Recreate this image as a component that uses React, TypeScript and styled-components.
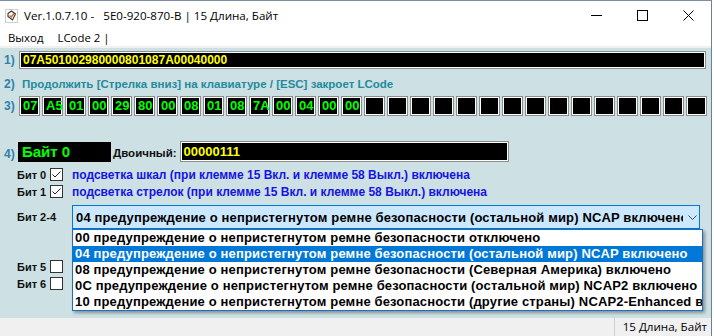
import React from "react";
import styled, { createGlobalStyle } from "styled-components";

const GlobalStyle = createGlobalStyle`
  html, body {
    margin: 0;
    padding: 0;
    background: #ffffff;
  }
  body {
    font-family: "Liberation Sans", Arial, sans-serif;
  }
  * {
    box-sizing: border-box;
  }
`;

const uiFont = `"Open Sans", "Noto Sans", sans-serif`;

const Window = styled.div`
  width: 712px;
  height: 336px;
  display: flex;
  flex-direction: column;
  border-top: 1px solid #7b8ea6;
  border-right: 1px solid #6f7f92;
  background: #ffffff;
  overflow: hidden;
`;

const TitleBar = styled.div`
  height: 29px;
  display: flex;
  align-items: center;
  padding-left: 5px;
`;

const TitleText = styled.div`
  flex: 1;
  margin-left: 6px;
  font: 11.6px ${uiFont};
  color: #000;
  white-space: pre;
`;

const CaptionButton = styled.div`
  width: 46px;
  height: 29px;
  display: flex;
  align-items: center;
  justify-content: center;
`;

const MenuBar = styled.div`
  height: 18px;
  display: flex;
  align-items: center;
  padding: 0 0 2px 8px;
  border-bottom: 2px solid #f0f0f0;
  font: 11.4px ${uiFont};
`;

const MenuItem = styled.span`
  margin-right: 14px;
`;

const Client = styled.div`
  flex: 1;
  background: #cde0e3;
  padding: 3px 3px 0 4px;
  display: flex;
  flex-direction: column;
`;

const Row = styled.div<{ $top?: number; $h: number }>`
  display: flex;
  align-items: center;
  height: ${(p) => p.$h}px;
  margin-top: ${(p) => p.$top ?? 0}px;
`;

const RowLabel = styled.span<{ $w?: number; $drop?: number }>`
  width: ${(p) => p.$w ?? 15}px;
  flex-shrink: 0;
  font-weight: bold;
  font-size: 12px;
  color: #2f82aa;
  padding-top: ${(p) => p.$drop ?? 0}px;
`;

const CodeBox = styled.div`
  flex: 1;
  height: 18px;
  background: #000;
  border: 1px solid #8c8c8c;
  box-shadow: inset 0 0 0 1px #ffffff;
  padding-left: 3px;
  color: #ffff00;
  font-weight: bold;
  font-size: 12px;
  line-height: 16px;
  margin-right: 2px;
`;

const Hint = styled.span`
  margin-left: 3px;
  font-weight: bold;
  font-size: 11.5px;
  color: #1f8b9d;
  white-space: nowrap;
`;

const Cells = styled.div`
  display: flex;
  gap: 2px;
`;

const Cell = styled.div`
  width: 21px;
  height: 20px;
  background: #000;
  border: 1px solid #8c8c8c;
  box-shadow: inset 0 0 0 1px #ffffff;
  color: #00ff00;
  font-weight: bold;
  font-size: 13px;
  line-height: 18px;
  padding-left: 3px;
`;

const ByteName = styled.div`
  width: 93px;
  height: 20px;
  background: #000;
  color: #00ff00;
  font-weight: bold;
  font-size: 15px;
  line-height: 20px;
  padding-left: 4px;
`;

const FieldLabel = styled.span`
  margin-left: 2px;
  font-weight: bold;
  font-size: 11.5px;
  color: #111;
  padding-top: 3px;
`;

const BinaryBox = styled.div`
  width: 329px;
  height: 21px;
  margin-left: 3px;
  background: #000;
  border: 1px solid #8c8c8c;
  box-shadow: inset 0 0 0 1px #ffffff;
  color: #ffff00;
  font-weight: bold;
  font-size: 13px;
  line-height: 19px;
  padding-left: 3px;
`;

const Bits = styled.div`
  display: flex;
  flex-direction: column;
  padding-left: 13px;
`;

const BitLabel = styled.span`
  width: 33px;
  flex-shrink: 0;
  font-weight: bold;
  font-size: 11px;
  color: #111;
  white-space: nowrap;
`;

const CheckBox = styled.div`
  width: 13px;
  height: 13px;
  background: #fff;
  border: 1px solid #333;
  display: flex;
  align-items: center;
  justify-content: center;
`;

const BitText = styled.span`
  margin-left: 9px;
  font-weight: bold;
  font-size: 12px;
  color: #1414e6;
  white-space: nowrap;
`;

const Combo = styled.div`
  position: relative;
  width: 628px;
  height: 24px;
  margin-left: 22px;
  background: #cce8ff;
  border: 1px solid #0078d7;
  display: flex;
  align-items: center;
  padding: 0 2px 0 3px;
`;

const ComboText = styled.span`
  flex: 1;
  overflow: hidden;
  white-space: nowrap;
  font-weight: bold;
  font-size: 13px;
  letter-spacing: 0.15px;
  color: #000;
  margin-right: 5px;
`;

const DropList = styled.div`
  position: absolute;
  top: 23px;
  left: -1px;
  width: 631px;
  background: #fff;
  border: 1px solid #1a6fc4;
  box-shadow: 2px 2px 3px rgba(0, 0, 0, 0.35);
  z-index: 2;
`;

const DropItem = styled.div<{ $selected?: boolean }>`
  height: 16px;
  line-height: 16px;
  padding-left: 2px;
  white-space: nowrap;
  overflow: hidden;
  font-weight: bold;
  font-size: 13px;
  letter-spacing: 0.15px;
  background: ${(p) => (p.$selected ? "#0078d7" : "#fff")};
  color: ${(p) => (p.$selected ? "#fff" : "#000")};
`;

const StatusBar = styled.div`
  height: 18px;
  background: #f0f0f0;
  display: flex;
  justify-content: flex-end;
`;

const StatusPanel = styled.div`
  border-left: 1px solid #d0d0d0;
  padding: 0 4px 0 8px;
  font: 11.6px ${uiFont};
  line-height: 18px;
  color: #000;
`;

const AppIcon = () => (
  <svg width="13" height="14" viewBox="0 0 13 14">
    <rect x="0.5" y="0.5" width="12" height="13" fill="#fff" stroke="#9a9a9a" strokeDasharray="1 1" />
    <path d="M3 4.5 L6.5 2 L10.5 5 L7.5 11 L3 7.5 Z" fill="none" stroke="#333" strokeWidth="1.1" />
    <path d="M4.5 6.5 L6.3 8 L9 4.5" fill="none" stroke="#e8632a" strokeWidth="1.5" />
  </svg>
);

const Check = () => (
  <svg width="11" height="11" viewBox="0 0 11 11">
    <path d="M1.5 5.5 L4 8 L9.5 2.5" fill="none" stroke="#222" strokeWidth="1" />
  </svg>
);

const bytes = ["07", "A5", "01", "00", "29", "80", "00", "08", "01", "08", "7A", "00", "04", "00", "00"];
const cells = Array.from({ length: 30 }, (_, i) => bytes[i] ?? "");

const options = [
  "00 предупреждение о непристегнутом ремне безопасности отключено",
  "04 предупреждение о непристегнутом ремне безопасности (остальной мир) NCAP включено",
  "08 предупреждение о непристегнутом ремне безопасности (Северная Америка) включено",
  "0C предупреждение о непристегнутом ремне безопасности (остальной мир) NCAP2 включено",
  "10 предупреждение о непристегнутом ремне безопасности (другие страны) NCAP2-Enhanced включено",
];

export default function App() {
  return (
    <>
      <GlobalStyle />
      <Window>
        <TitleBar>
          <AppIcon />
          <TitleText>Ver.1.0.7.10 -   5E0-920-870-B | 15 Длина, Байт</TitleText>
          <CaptionButton>
            <svg width="11" height="11" viewBox="0 0 11 11">
              <path d="M0 5.5 H11" stroke="#000" strokeWidth="1" />
            </svg>
          </CaptionButton>
          <CaptionButton>
            <svg width="11" height="11" viewBox="0 0 11 11">
              <rect x="0.5" y="0.5" width="10" height="10" fill="none" stroke="#000" />
            </svg>
          </CaptionButton>
          <CaptionButton>
            <svg width="11" height="11" viewBox="0 0 11 11">
              <path d="M0.5 0.5 L10.5 10.5 M10.5 0.5 L0.5 10.5" stroke="#000" strokeWidth="1" />
            </svg>
          </CaptionButton>
        </TitleBar>
        <MenuBar>
          <MenuItem>Выход</MenuItem>
          <MenuItem>LCode 2 |</MenuItem>
        </MenuBar>
        <Client>
          <Row $h={18}>
            <RowLabel>1)</RowLabel>
            <CodeBox>07A501002980000801087A00040000</CodeBox>
          </Row>
          <Row $top={7} $h={16}>
            <RowLabel>2)</RowLabel>
            <Hint>Продолжить [Стрелка вниз] на клавиатуре / [ESC] закроет LCode</Hint>
          </Row>
          <Row $top={4} $h={20}>
            <RowLabel>3)</RowLabel>
            <Cells>
              {cells.map((c, i) => (
                <Cell key={i}>{c}</Cell>
              ))}
            </Cells>
          </Row>
          <Row $top={25} $h={21}>
            <RowLabel $w={14} $drop={4}>4)</RowLabel>
            <ByteName>Байт 0</ByteName>
            <FieldLabel>Двоичный:</FieldLabel>
            <BinaryBox>00000111</BinaryBox>
          </Row>
          <Bits>
            <Row $top={4} $h={17}>
              <BitLabel>Бит 0</BitLabel>
              <CheckBox>
                <Check />
              </CheckBox>
              <BitText>подсветка шкал (при клемме 15 Вкл. и клемме 58 Выкл.) включена</BitText>
            </Row>
            <Row $h={17}>
              <BitLabel>Бит 1</BitLabel>
              <CheckBox>
                <Check />
              </CheckBox>
              <BitText>подсветка стрелок (при клемме 15 Вкл. и клемме 58 Выкл.) включена</BitText>
            </Row>
            <Row $top={5} $h={24}>
              <BitLabel>Бит 2-4</BitLabel>
              <Combo>
                <ComboText>{options[1]}</ComboText>
                <svg width="9" height="5" viewBox="0 0 9 5">
                  <path d="M0.5 0.5 L4.5 4.5 L8.5 0.5" fill="none" stroke="#444" strokeWidth="1" />
                </svg>
                <DropList>
                  {options.map((o, i) => (
                    <DropItem key={o} $selected={i === 1}>
                      {o}
                    </DropItem>
                  ))}
                </DropList>
              </Combo>
            </Row>
            <Row $top={29} $h={17}>
              <BitLabel>Бит 5</BitLabel>
              <CheckBox />
            </Row>
            <Row $h={17}>
              <BitLabel>Бит 6</BitLabel>
              <CheckBox />
            </Row>
          </Bits>
        </Client>
        <StatusBar>
          <StatusPanel>15 Длина, Байт</StatusPanel>
        </StatusBar>
      </Window>
    </>
  );
}
